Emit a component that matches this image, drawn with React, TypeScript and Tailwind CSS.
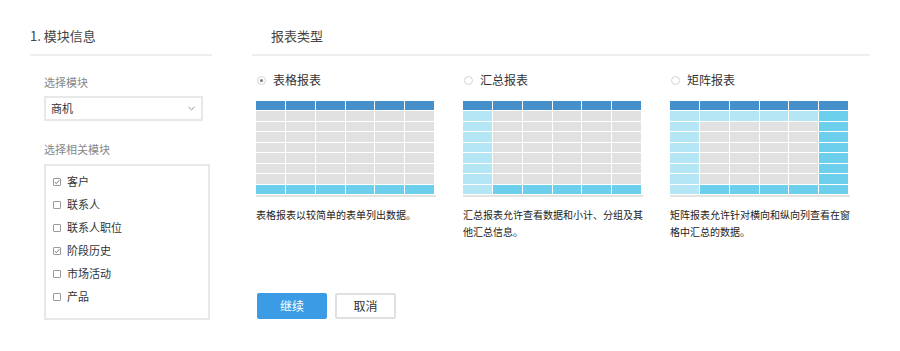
import type { ReactNode } from "react";

type Cell = "h" | "g" | "l" | "c";

const CELL_BG: Record<Cell, string> = {
  h: "bg-[#4590cb]",
  g: "bg-[#e1e1e1]",
  l: "bg-[#b4e6f5]",
  c: "bg-[#6ccfec]",
};

function buildGrid(kind: "table" | "summary" | "matrix"): Cell[][] {
  const rows: Cell[][] = [];
  for (let r = 0; r < 9; r++) {
    const row: Cell[] = [];
    for (let c = 0; c < 6; c++) {
      if (r === 0) row.push("h");
      else if (kind === "table") row.push(r === 8 ? "c" : "g");
      else if (kind === "summary") {
        if (c === 0) row.push("l");
        else row.push(r === 8 ? "c" : "g");
      } else {
        if (c === 5) row.push("c");
        else if (r === 1 || c === 0) row.push("l");
        else if (r === 8) row.push("c");
        else row.push("g");
      }
    }
    rows.push(row);
  }
  return rows;
}

function Preview({ kind }: { kind: "table" | "summary" | "matrix" }) {
  const grid = buildGrid(kind);
  return (
    <div className="w-[180px] border-b-2 border-[#e3e3e3] pb-px">
      <div className="grid h-[93px] w-[178px] grid-cols-6 grid-rows-9 gap-px bg-white">
        {grid.flatMap((row, r) => row.map((cell, c) => <div key={`${r}-${c}`} className={CELL_BG[cell]} />))}
      </div>
    </div>
  );
}

function Radio({ checked }: { checked?: boolean }) {
  return (
    <span className="flex h-[9px] w-[9px] items-center justify-center rounded-full border border-[#d4d4d4] bg-white">
      {checked && <span className="h-[3px] w-[3px] rounded-full bg-[#777]" />}
    </span>
  );
}

function Check({ checked }: { checked?: boolean }) {
  return (
    <span className="flex h-[8px] w-[8px] items-center justify-center rounded-[1px] border border-[#9a9a9a] bg-white">
      {checked && (
        <svg width="6" height="6" viewBox="0 0 6 6" fill="none">
          <path d="M0.8 3.2 L2.4 4.6 L5.3 1.2" stroke="#666" strokeWidth="0.9" />
        </svg>
      )}
    </span>
  );
}

function SectionTitle({ children, className }: { children: ReactNode; className?: string }) {
  return (
    <div className={`border-b-2 border-[#efefef] pb-[8px] pt-[26px] ${className ?? ""}`}>
      <div className="h-[20px] text-[13px] leading-[20px] text-[#444]">{children}</div>
    </div>
  );
}

const modules = [
  { name: "客户", checked: true },
  { name: "联系人", checked: false },
  { name: "联系人职位", checked: false },
  { name: "阶段历史", checked: true },
  { name: "市场活动", checked: false },
  { name: "产品", checked: false },
];

const types = [
  { kind: "table" as const, label: "表格报表", checked: true, desc: "表格报表以较简单的表单列出数据。" },
  { kind: "summary" as const, label: "汇总报表", checked: false, desc: "汇总报表允许查看数据和小计、分组及其他汇总信息。" },
  { kind: "matrix" as const, label: "矩阵报表", checked: false, desc: "矩阵报表允许针对横向和纵向列查看在窗格中汇总的数据。" },
];

export default function App() {
  return (
    <div
      className="flex h-[351px] w-[900px] bg-white text-[#333]"
      style={{ fontFamily: '"Noto Sans CJK SC", "Noto Sans", sans-serif' }}
    >
      <div className="ml-[30px] w-[182px] shrink-0">
        <SectionTitle>1. 模块信息</SectionTitle>
        <div className="pl-[14px]">
          <div className="mt-[18px] text-[11px] leading-[16px] text-[#888]">选择模块</div>
          <div className="mt-[6px] flex h-[25px] w-[159px] items-center justify-between border-2 border-[#e8e8e8] pl-[5px] pr-[6px] text-[11px]">
            <span>商机</span>
            <svg width="7" height="5" viewBox="0 0 7 5" fill="none">
              <path d="M0.5 1 L3.5 3.8 L6.5 1" stroke="#888" strokeWidth="0.9" />
            </svg>
          </div>
          <div className="mt-[20px] text-[11px] leading-[16px] text-[#888]">选择相关模块</div>
          <div className="mt-[7px] h-[156px] w-[166px] border-2 border-[#e8e8e8] pl-[7px] pt-[4px]">
            {modules.map((m) => (
              <div key={m.name} className="flex h-[23px] items-center gap-[6px] text-[11px]">
                <Check checked={m.checked} />
                <span>{m.name}</span>
              </div>
            ))}
          </div>
        </div>
      </div>

      <div className="ml-[40px] w-[618px] shrink-0">
        <SectionTitle className="pl-[19px]">报表类型</SectionTitle>
        <div className="flex items-start pl-[4px]">
          {types.map((t) => (
            <div key={t.kind} className="w-[207px] shrink-0">
              <div className="mt-[14px] flex h-[20px] items-center gap-[7px] pl-[1px] text-[12px]">
                <Radio checked={t.checked} />
                <span>{t.label}</span>
              </div>
              <div className="mt-[11px]">
                <Preview kind={t.kind} />
              </div>
              <div className="mt-[9px] h-[34px] w-[182px] text-[10px] leading-[17px] text-[#222]">{t.desc}</div>
            </div>
          ))}
        </div>
        <div className="mt-[53px] flex gap-[8px] pl-[5px]">
          <button className="h-[26px] w-[70px] rounded-[2px] bg-[#3b9be5] text-[12px] text-white">继续</button>
          <button className="h-[26px] w-[61px] rounded-[2px] border-2 border-[#e0e0e0] bg-white text-[12px] text-[#333]">
            取消
          </button>
        </div>
      </div>
    </div>
  );
}
